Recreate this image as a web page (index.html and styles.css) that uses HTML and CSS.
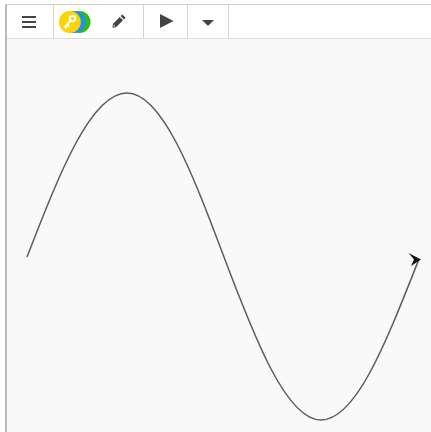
FILE: index.html
```html
<!DOCTYPE html>
<html lang="en">
<head>
<meta charset="utf-8">
<title>Sketch</title>
<link rel="stylesheet" href="styles.css">
</head>
<body>
<div class="frame">
  <div class="toolbar">
    <div class="tool tool-menu">
      <svg width="14" height="12" viewBox="0 0 14 12"><path class="ink" d="M0 0h14v2H0zM0 5h14v2H0zM0 10h14v2H0z"/></svg>
    </div>
    <div class="tool tool-edit">
      <svg class="badge" width="32" height="22" viewBox="0 0 32 22">
        <circle cx="20.500" cy="11" r="11" fill="#2dbb1f"/>
        <circle cx="15.500" cy="11" r="11" fill="#1b93ee"/>
        <circle cx="10.800" cy="11" r="11" fill="#ffd400"/>
        <g fill="none" stroke="#fff" stroke-width="2">
          <circle cx="13.500" cy="7.500" r="2.800"/>
          <path d="M11.500 9.500 5.500 16.500M8 13.500l2 2M6 15.500l1.500 1.500"/>
        </g>
      </svg>
      <svg class="pencil" width="14" height="14" viewBox="0 0 14 14">
        <path class="ink" d="M10.300.4 13.600 3.700 11.900 5.400 8.600 2.100zM7.700 3 11 6.300 4 13.300.4 13.800.9 10z"/>
        <path class="tip" d="M1.700 10.600 3.400 12.300 1.500 12.600z"/>
      </svg>
    </div>
    <div class="tool tool-play">
      <svg width="14" height="14" viewBox="0 0 14 14"><path class="ink" d="M0 0 13.500 7 0 14z"/></svg>
    </div>
    <div class="tool tool-caret">
      <svg width="12" height="6" viewBox="0 0 12 6"><path class="ink" d="M0 0h12L6 6z"/></svg>
    </div>
  </div>
  <div class="canvas">
    <svg class="drawing" width="424" height="393" viewBox="7 39 424 393">
      <path class="curve" d="M27 257C59.600 173 90.800 93 127 93C162 93 192.400 173 224 257C255.600 341 286.900 420 321 420C356.500 420 387 340 419 259"/>
      <path class="head" d="M408.500 253 421 259.500 411 266 414 259.500z"/>
    </svg>
  </div>
</div>
</body>
</html>
```

FILE: styles.css
```css
html, body {
  margin: 0;
  padding: 0;
  height: 100%;
  background: #fff;
  overflow: hidden;
}

.frame {
  box-sizing: border-box;
  height: 432px;
  margin-top: 4px;
  margin-left: 5px;
  border-top: 1px solid #ccc;
  border-left: 2px solid #bbb;
  display: flex;
  flex-direction: column;
}

.toolbar {
  box-sizing: border-box;
  height: 34px;
  flex: none;
  display: flex;
  background: #fff;
  border-bottom: 1px solid #ddd;
}

.tool {
  box-sizing: border-box;
  display: flex;
  align-items: center;
  justify-content: center;
  border-right: 1px solid #d4d4d4;
}

.tool-menu { width: 47px; padding-right: 3px; }
.tool-edit { width: 90px; justify-content: flex-start; padding-left: 5px; }
.tool-play { width: 44px; padding-left: 3px; padding-bottom: 1px; }
.tool-caret { width: 41px; padding-top: 3px; }

.pencil { margin-left: 21px; margin-bottom: 1px; }

.ink { fill: #444; }
.tip { fill: #fff; }

.canvas {
  flex: 1;
  background: #f9f9f9;
  overflow: hidden;
}

.drawing { display: block; }

.curve {
  fill: none;
  stroke: #5c5c5c;
  stroke-width: 1.500;
}

.head { fill: #111; }
```
